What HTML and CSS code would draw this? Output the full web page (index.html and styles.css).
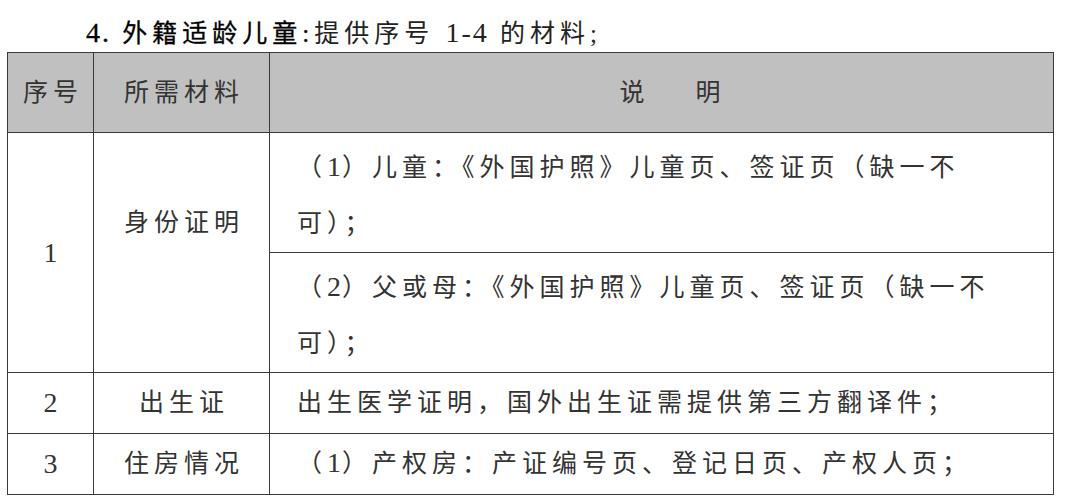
FILE: index.html
```html
<!DOCTYPE html>
<html lang="zh-CN">
<head>
<meta charset="utf-8">
<link rel="stylesheet" href="styles.css">
</head>
<body>
<div class="page">
  <p class="title"><span class="lead"><span class="d">4.</span> 外籍适龄儿童:</span>提供序号 <span class="d">1-4</span> 的材料;</p>
  <table class="grid">
    <colgroup><col class="c1"><col class="c2"><col class="c3"></colgroup>
    <thead>
      <tr class="head">
        <th class="ctr">序号</th>
        <th class="ctr">所需材料</th>
        <th class="ctr desc-h">说<span class="gap"></span>明</th>
      </tr>
    </thead>
    <tbody>
      <tr class="sub">
        <td rowspan="2" class="ctr num">1</td>
        <td rowspan="2" class="ctr mat top">身份证明</td>
        <td class="desc">（<span class="d">1</span>）儿童：《外国护照》儿童页、签证页（缺一不<br>可）；</td>
      </tr>
      <tr class="sub">
        <td class="desc">（<span class="d">2</span>）父或母：《外国护照》儿童页、签证页（缺一不<br>可）；</td>
      </tr>
      <tr class="row">
        <td class="ctr num">2</td>
        <td class="ctr mat">出生证</td>
        <td class="desc one">出生医学证明，国外出生证需提供第三方翻译件；</td>
      </tr>
      <tr class="row">
        <td class="ctr num">3</td>
        <td class="ctr mat">住房情况</td>
        <td class="desc one">（<span class="d">1</span>）产权房：产证编号页、登记日页、产权人页；</td>
      </tr>
    </tbody>
  </table>
</div>
</body>
</html>
```

FILE: styles.css
```css
* { box-sizing: border-box; }
html, body { margin: 0; padding: 0; background: #ffffff; }
body {
  font-family: "Liberation Serif", "Noto Sans CJK SC", serif;
  color: #333333;
  font-size: 25px;
  letter-spacing: 5px;
}
.d { font-size: 28px; letter-spacing: 1px; line-height: 1; }
.page { width: 1080px; padding-left: 7px; }
.title {
  margin: 0;
  height: 52px;
  padding: 14px 0 0 79px;
  line-height: 40px;
  letter-spacing: 5px;
  color: #222222;
}
.title .d { letter-spacing: 2px; }
.title .lead { color: #000; -webkit-text-stroke: 0.3px #000; }
.grid {
  border-collapse: collapse;
  table-layout: fixed;
  width: 1047px;
}
.c1 { width: 86px; }
.c2 { width: 176px; }
.grid th, .grid td {
  border: 1px solid #3a3a3a;
  padding: 0;
  font-weight: normal;
}
.ctr { text-align: center; padding-left: 5px !important; }
.head th {
  background: #c0c0c0;
  height: 80px;
  line-height: 40px;
  vertical-align: middle;
}
.desc-h { padding-left: 22px !important; }
.gap { display: inline-block; width: 46px; }
.sub { height: 120px; }
.num { vertical-align: middle; line-height: 40px; font-size: 28px; }
.mat { vertical-align: middle; line-height: 40px; }
.mat.top { vertical-align: top; padding-top: 70px !important; }
.desc {
  vertical-align: top;
  padding: 7px 0 0 27px !important;
  line-height: 56px;
}
.row { height: 61px; }
.desc.one { vertical-align: middle; padding-top: 0 !important; line-height: 40px; }
```
